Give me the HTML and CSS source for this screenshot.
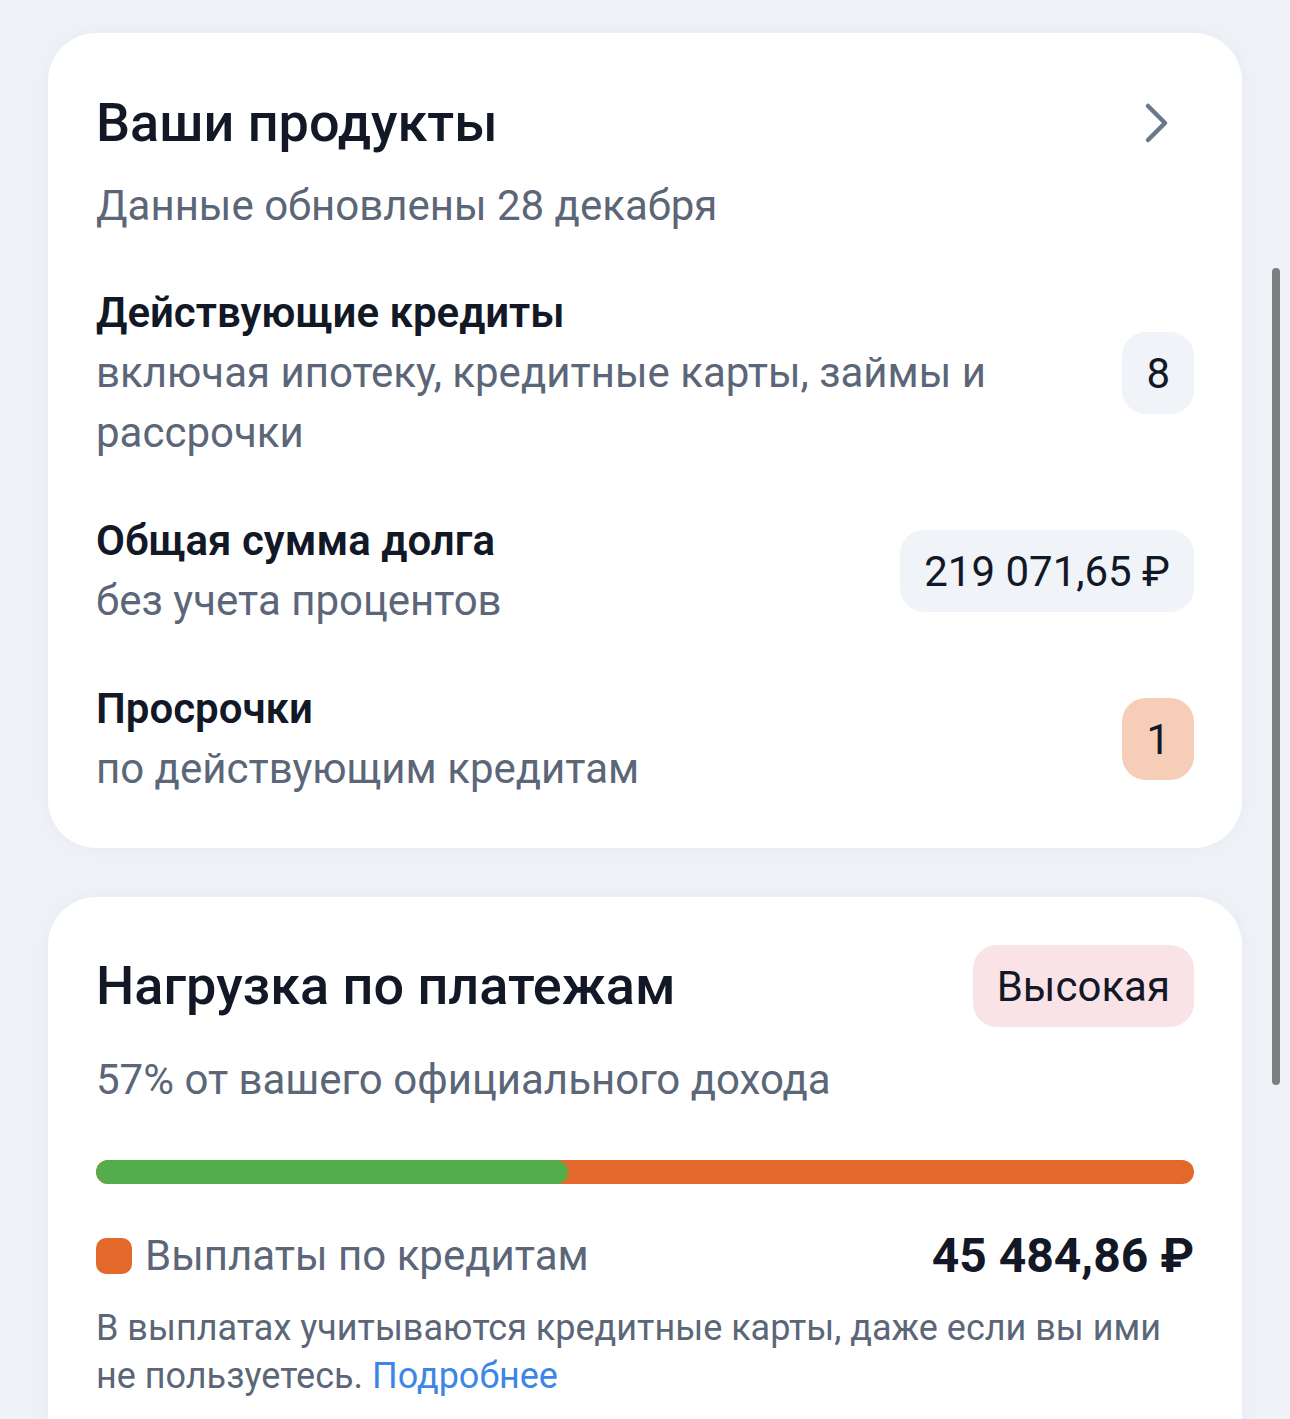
FILE: index.html
```html
<!DOCTYPE html>
<html lang="ru">
<head>
<meta charset="utf-8">
<title>Ваши продукты</title>
<link rel="stylesheet" href="styles.css">
</head>
<body>
<main class="page">
  <section class="card">
    <div class="card-head">
      <h2 class="card-title">Ваши продукты</h2>
      <svg class="chevron" width="30" height="42" viewBox="0 0 30 42" aria-hidden="true">
        <path d="M6 4 L23 21 L6 38" fill="none" stroke="#6b778a" stroke-width="4.5" stroke-linecap="round" stroke-linejoin="round"/>
      </svg>
    </div>
    <p class="card-sub">Данные обновлены 28 декабря</p>

    <div class="rows">
      <div class="row">
        <div class="row-text">
          <div class="row-label">Действующие кредиты</div>
          <div class="row-desc">включая ипотеку, кредитные карты, займы и рассрочки</div>
        </div>
        <div class="badge badge-gray">8</div>
      </div>
      <div class="row">
        <div class="row-text">
          <div class="row-label">Общая сумма долга</div>
          <div class="row-desc">без учета процентов</div>
        </div>
        <div class="badge badge-gray">219 071,65 ₽</div>
      </div>
      <div class="row">
        <div class="row-text">
          <div class="row-label">Просрочки</div>
          <div class="row-desc">по действующим кредитам</div>
        </div>
        <div class="badge badge-peach">1</div>
      </div>
    </div>
  </section>

  <section class="card card-load">
    <div class="load-head">
      <h2 class="card-title">Нагрузка по платежам</h2>
      <div class="badge badge-pink">Высокая</div>
    </div>
    <p class="card-sub load-sub">57% от вашего официального дохода</p>
    <div class="bar">
      <div class="bar-fill" style="width: 43%"></div>
    </div>
    <div class="legend">
      <div class="legend-left">
        <span class="legend-dot"></span>
        <span class="legend-label">Выплаты по кредитам</span>
      </div>
      <div class="legend-amount">45 484,86 ₽</div>
    </div>
    <p class="note">В выплатах учитываются кредитные карты, даже если вы ими не&nbsp;пользуетесь. <a class="note-link" href="#">Подробнее</a></p>
  </section>
</main>
<div class="scrollbar"></div>
</body>
</html>
```

FILE: styles.css
```css
* {
  box-sizing: border-box;
}

html, body {
  margin: 0;
  padding: 0;
  background: #eff2f7;
}

body {
  font-family: Roboto, "Noto Sans", Arial, sans-serif;
  color: #121826;
  height: 1419px;
  overflow: hidden;
}

.page {
  padding: 33px 48px 0 48px;
  display: flex;
  flex-direction: column;
  gap: 49px;
}

.card {
  background: #ffffff;
  border-radius: 48px;
  padding: 60px 48px 49px 48px;
  box-shadow: 0 0 24px rgba(30, 40, 70, 0.04);
}

.card-head {
  display: flex;
  align-items: center;
  justify-content: space-between;
}

.card-title {
  margin: 0;
  font-size: 54px;
  line-height: 60px;
  font-weight: 500;
  color: #121826;
}

.chevron {
  display: block;
  margin-right: 22px;
}

.card-sub {
  margin: 23px 0 0 0;
  font-size: 42px;
  line-height: 60px;
  color: #5b6678;
}

.rows {
  margin-top: 47px;
  display: flex;
  flex-direction: column;
  gap: 48px;
}

.row {
  display: flex;
  align-items: center;
  justify-content: space-between;
  gap: 48px;
}

.row-text {
  flex: 1;
  min-width: 0;
}

.row-label {
  font-size: 42px;
  line-height: 60px;
  font-weight: 600;
  color: #121826;
}

.row-desc {
  font-size: 42px;
  line-height: 60px;
  color: #5b6678;
}

.badge {
  flex: none;
  height: 82px;
  padding: 0 24px;
  border-radius: 24px;
  display: flex;
  align-items: center;
  justify-content: center;
  font-size: 42px;
  color: #121826;
  white-space: nowrap;
}

.badge-gray {
  background: #f0f3f8;
}

.badge-peach {
  background: #f6cdb7;
}

.badge-pink {
  background: #fae3e6;
}

.card-load {
  padding-top: 48px;
  padding-bottom: 96px;
}

.load-head {
  display: flex;
  align-items: center;
  justify-content: space-between;
}

.load-sub {
  margin-top: 23px;
}

.bar {
  margin-top: 50px;
  height: 24px;
  border-radius: 12px;
  background: #e2692b;
  overflow: hidden;
}

.bar-fill {
  height: 100%;
  background: #53ad4b;
  border-radius: 12px;
}

.legend {
  margin-top: 42px;
  display: flex;
  align-items: center;
  justify-content: space-between;
  height: 60px;
}

.legend-left {
  display: flex;
  align-items: center;
  gap: 13px;
}

.legend-dot {
  width: 36px;
  height: 36px;
  border-radius: 10px;
  background: #e2692b;
  display: block;
}

.legend-label {
  font-size: 42px;
  line-height: 60px;
  color: #5b6678;
}

.legend-amount {
  font-size: 48px;
  line-height: 60px;
  font-weight: 700;
  color: #121826;
}

.note {
  margin: 18px 0 0 0;
  font-size: 36px;
  line-height: 48px;
  color: #5b6678;
}

.note-link {
  color: #3d86e6;
  text-decoration: none;
}

.scrollbar {
  position: fixed;
  left: 1272px;
  top: 268px;
  width: 8px;
  height: 817px;
  border-radius: 4px;
  background: #7d7e82;
}
```
